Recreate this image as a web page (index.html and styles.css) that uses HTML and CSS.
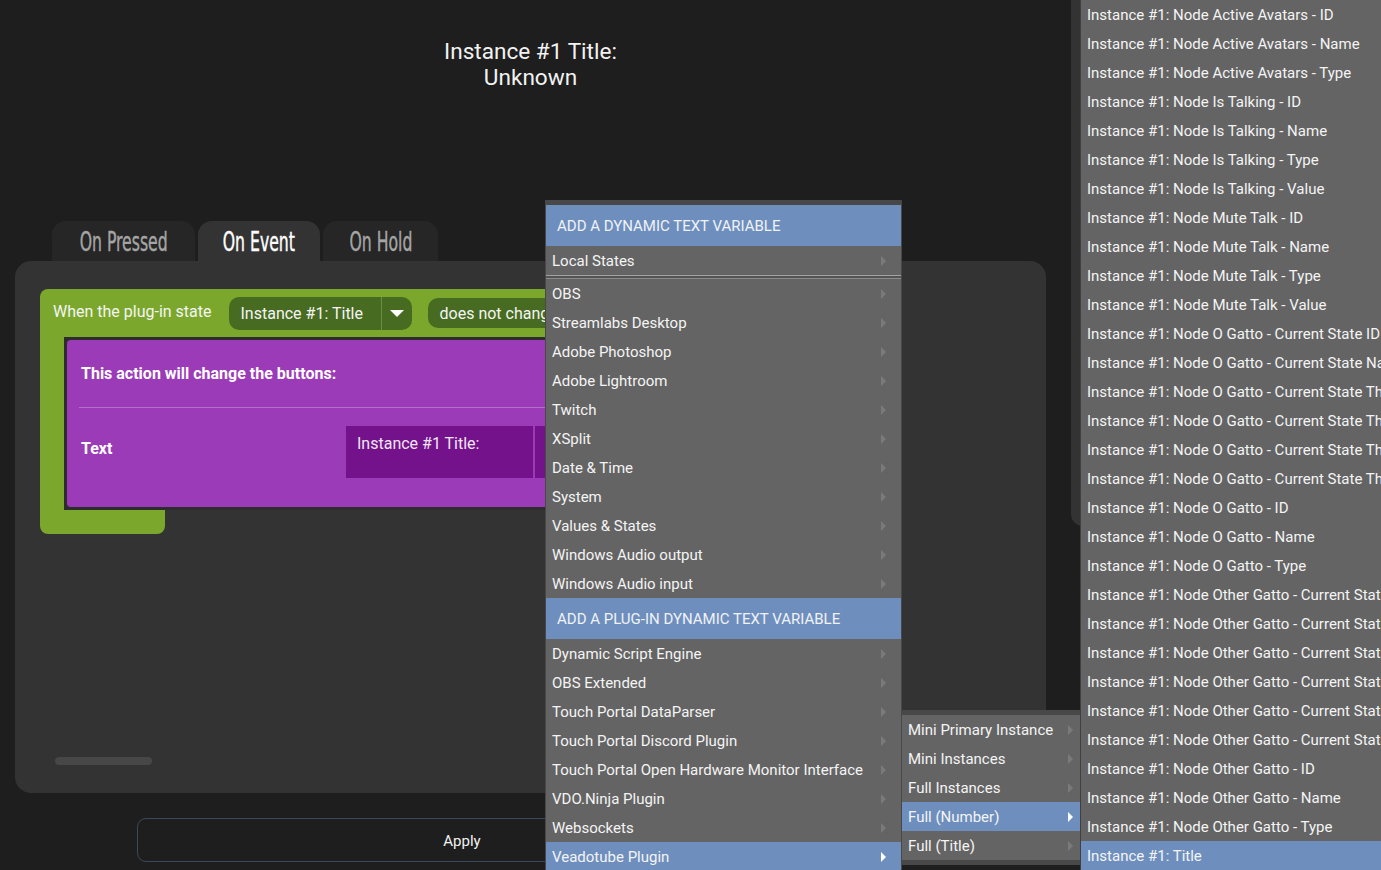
FILE: index.html
```html
<!DOCTYPE html>
<html lang="en">
<head>
    <meta charset="UTF-8">
    <meta name="viewport" content="width=device-width, initial-scale=1.0">
    <title>Button Editor - Dynamic Text</title>
    <link rel="stylesheet" href="styles.css">
</head>
<body>
    <div class="page">
        <!-- Editor Column -->
        <div class="editor">
            <div class="preview-title">Instance #1 Title:<br>Unknown</div>

            <!-- Tabs -->
            <div class="tabs">
                <div class="tab tab-pressed"><span>On Pressed</span></div>
                <div class="tab tab-event active"><span>On Event</span></div>
                <div class="tab tab-hold"><span>On Hold</span></div>
            </div>

            <!-- Action Panel -->
            <div class="panel">
                <div class="condition">
                    <div class="condition-head">
                        <span class="condition-label">When the plug-in state</span>
                        <div class="pill pill-select">
                            <span class="pill-text">Instance #1: Title</span>
                            <span class="pill-caret"></span>
                        </div>
                        <div class="pill pill-op">does not change</div>
                    </div>
                    <div class="action-wrap">
                        <div class="action">
                            <div class="action-title">This action will change the buttons:</div>
                            <div class="action-sep"></div>
                            <div class="action-row">
                                <span class="action-label">Text</span>
                                <div class="action-input">Instance #1 Title:</div>
                                <div class="action-input action-input-more"></div>
                            </div>
                        </div>
                    </div>
                </div>
                <div class="condition-foot"></div>
                <div class="scroll-thumb"></div>
            </div>

            <button class="apply">Apply</button>
        </div>

        <!-- Window behind the list -->
        <div class="side-panel"></div>
    </div>

    <!-- Context Menu -->
    <div class="menu menu-main">
        <div class="menu-header">ADD A DYNAMIC TEXT VARIABLE</div>
        <div class="menu-item sub">Local States</div>
        <div class="menu-sep"></div>
        <div class="menu-item sub">OBS</div>
        <div class="menu-item sub">Streamlabs Desktop</div>
        <div class="menu-item sub">Adobe Photoshop</div>
        <div class="menu-item sub">Adobe Lightroom</div>
        <div class="menu-item sub">Twitch</div>
        <div class="menu-item sub">XSplit</div>
        <div class="menu-item sub">Date &amp; Time</div>
        <div class="menu-item sub">System</div>
        <div class="menu-item sub">Values &amp; States</div>
        <div class="menu-item sub">Windows Audio output</div>
        <div class="menu-item sub">Windows Audio input</div>
        <div class="menu-header">ADD A PLUG-IN DYNAMIC TEXT VARIABLE</div>
        <div class="menu-item sub">Dynamic Script Engine</div>
        <div class="menu-item sub">OBS Extended</div>
        <div class="menu-item sub">Touch Portal DataParser</div>
        <div class="menu-item sub">Touch Portal Discord Plugin</div>
        <div class="menu-item sub">Touch Portal Open Hardware Monitor Interface</div>
        <div class="menu-item sub">VDO.Ninja Plugin</div>
        <div class="menu-item sub">Websockets</div>
        <div class="menu-item sub selected">Veadotube Plugin</div>
    </div>

    <!-- Plugin Submenu -->
    <div class="menu menu-plugin">
        <div class="menu-item sub">Mini Primary Instance</div>
        <div class="menu-item sub">Mini Instances</div>
        <div class="menu-item sub">Full Instances</div>
        <div class="menu-item sub selected">Full (Number)</div>
        <div class="menu-item sub">Full (Title)</div>
    </div>

    <!-- State List -->
    <div class="menu menu-states">
        <div class="menu-item">Instance #1: Node Active Avatars - ID</div>
        <div class="menu-item">Instance #1: Node Active Avatars - Name</div>
        <div class="menu-item">Instance #1: Node Active Avatars - Type</div>
        <div class="menu-item">Instance #1: Node Is Talking - ID</div>
        <div class="menu-item">Instance #1: Node Is Talking - Name</div>
        <div class="menu-item">Instance #1: Node Is Talking - Type</div>
        <div class="menu-item">Instance #1: Node Is Talking - Value</div>
        <div class="menu-item">Instance #1: Node Mute Talk - ID</div>
        <div class="menu-item">Instance #1: Node Mute Talk - Name</div>
        <div class="menu-item">Instance #1: Node Mute Talk - Type</div>
        <div class="menu-item">Instance #1: Node Mute Talk - Value</div>
        <div class="menu-item">Instance #1: Node O Gatto - Current State ID</div>
        <div class="menu-item">Instance #1: Node O Gatto - Current State Name</div>
        <div class="menu-item">Instance #1: Node O Gatto - Current State Thumbnail</div>
        <div class="menu-item">Instance #1: Node O Gatto - Current State Thumbnail Hash</div>
        <div class="menu-item">Instance #1: Node O Gatto - Current State Thumbnail Path</div>
        <div class="menu-item">Instance #1: Node O Gatto - Current State Thumbnail Size</div>
        <div class="menu-item">Instance #1: Node O Gatto - ID</div>
        <div class="menu-item">Instance #1: Node O Gatto - Name</div>
        <div class="menu-item">Instance #1: Node O Gatto - Type</div>
        <div class="menu-item">Instance #1: Node Other Gatto - Current State ID</div>
        <div class="menu-item">Instance #1: Node Other Gatto - Current State Name</div>
        <div class="menu-item">Instance #1: Node Other Gatto - Current State Thumbnail</div>
        <div class="menu-item">Instance #1: Node Other Gatto - Current State Thumbnail Hash</div>
        <div class="menu-item">Instance #1: Node Other Gatto - Current State Thumbnail Path</div>
        <div class="menu-item">Instance #1: Node Other Gatto - Current State Thumbnail Size</div>
        <div class="menu-item">Instance #1: Node Other Gatto - ID</div>
        <div class="menu-item">Instance #1: Node Other Gatto - Name</div>
        <div class="menu-item">Instance #1: Node Other Gatto - Type</div>
        <div class="menu-item selected">Instance #1: Title</div>
    </div>
</body>
</html>
```

FILE: styles.css
```css
/* Global Styling */
* {
    box-sizing: border-box;
}
body {
    margin: 0;
    width: 1381px;
    height: 870px;
    overflow: hidden;
    background-color: #1e1e1e;
    color: #f0f0f0;
    font-family: Roboto, "Liberation Sans", sans-serif;
    position: relative;
}
.page {
    display: flex;
    align-items: flex-start;
}
/* Editor Column */
.editor {
    width: 1031px;
    margin-left: 15px;
}
.preview-title {
    padding-top: 39px;
    text-align: center;
    font-size: 22.6px;
    line-height: 26px;
    color: #f2f2f2;
}
/* Tabs */
.tabs {
    display: flex;
    gap: 3px;
    margin-top: 130px;
    margin-left: 37px;
}
.tab {
    height: 40px;
    background-color: #262626;
    border-radius: 14px 14px 0 0;
    display: flex;
    justify-content: center;
    align-items: center;
    color: #a5a5a5;
}
.tab span {
    font-family: "Liberation Sans Narrow", "DejaVu Sans Condensed", sans-serif;
    font-stretch: condensed;
    font-size: 26px;
    display: inline-block;
    transform: scaleX(0.67);
    padding-top: 2px;
    -webkit-text-stroke: 0.4px currentColor;
}
.tab-pressed { width: 143px; }
.tab-event { width: 122px; }
.tab-hold { width: 115px; }
.tab.active {
    background-color: #333333;
    color: #ffffff;
}
/* Action Panel */
.panel {
    height: 532px;
    background-color: #333333;
    border-radius: 16px;
    padding: 28px 0 0 25px;
    display: flex;
    flex-direction: column;
}
.condition {
    width: 620px;
    background-color: #7ba82c;
    border-radius: 8px 8px 0 0;
    padding-left: 24px;
}
.condition-head {
    height: 48px;
    display: flex;
    align-items: center;
    margin-left: -24px;
    padding-left: 13px;
}
.condition-label {
    font-size: 16px;
    color: #f4f4f4;
    margin-right: 17px;
    margin-top: -4px;
}
.pill {
    height: 33px;
    background-color: #476b20;
    border-radius: 10px;
    display: flex;
    align-items: center;
    font-size: 16px;
    color: #f4f4f4;
}
.pill-select {
    width: 183px;
    margin-right: 16px;
}
.pill-text {
    padding-left: 12px;
    width: 152px;
}
.pill-caret {
    width: 31px;
    height: 33px;
    border-left: 1px solid #6b8f3c;
    display: flex;
    justify-content: center;
    align-items: center;
}
.pill-caret::after {
    content: "";
    border-left: 7px solid transparent;
    border-right: 7px solid transparent;
    border-top: 7px solid #ffffff;
}
.pill-op {
    height: 30px;
    padding: 0 12px;
    white-space: nowrap;
}
.action-wrap {
    background-color: #2d2d2d;
    padding: 3px 0 3px 3px;
}
.action {
    background-color: #9c3bb8;
    border-radius: 4px;
    padding: 0 0 29px 14px;
}
.action-title {
    height: 67px;
    display: flex;
    align-items: center;
    font-size: 16px;
    font-weight: bold;
    color: #ffffff;
}
.action-sep {
    height: 1px;
    background-color: #b66dcc;
    margin-left: -2px;
}
.action-row {
    display: flex;
    margin-top: 18px;
    height: 52px;
}
.action-label {
    width: 265px;
    padding-top: 13px;
    font-size: 16px;
    font-weight: bold;
    color: #ffffff;
}
.action-input {
    width: 187px;
    background-color: #74128b;
    padding: 8px 0 0 11px;
    font-size: 16px;
    color: #f0e6f3;
}
.action-input-more {
    margin-left: 2px;
    width: 120px;
}
.condition-foot {
    width: 125px;
    height: 24px;
    background-color: #7ba82c;
    border-radius: 0 0 8px 8px;
}
.scroll-thumb {
    margin-top: auto;
    margin-bottom: 28px;
    margin-left: 15px;
    width: 97px;
    height: 8px;
    border-radius: 4px;
    background-color: #474747;
}
/* Apply Button */
.apply {
    display: block;
    margin: 25px 0 0 122px;
    width: 650px;
    height: 44px;
    background-color: #1e1e1e;
    border: 1px solid #3a4a5c;
    border-radius: 9px;
    color: #f2f2f2;
    font-family: Roboto, "Liberation Sans", sans-serif;
    font-size: 15px;
    padding-top: 2px;
}
/* Window behind the list */
.side-panel {
    margin-left: 25px;
    flex-grow: 1;
    height: 526px;
    background-color: #333333;
    border-bottom-left-radius: 12px;
}
/* Menus */
.menu {
    position: absolute;
    background-color: #646464;
    border: 1px solid #484848;
    font-size: 15px;
    color: #f4f4f4;
}
.menu-main {
    left: 545px;
    top: 200px;
    width: 357px;
    border-top-width: 5px;
    border-bottom: none;
}
.menu-plugin {
    left: 902px;
    top: 710px;
    width: 179px;
    border-top-width: 5px;
    border-bottom-width: 5px;
    border-left: none;
}
.menu-states {
    left: 1080px;
    top: 0;
    right: 0;
    bottom: 0;
    border-top: none;
    border-right: none;
    border-bottom: none;
    border-left-color: #404040;
}
.menu-header {
    height: 41px;
    background-color: #6e8fbe;
    padding-left: 11px;
    display: flex;
    align-items: center;
    font-size: 15px;
    color: #f0f2f6;
    padding-top: 1px;
}
.menu-item {
    height: 29px;
    padding: 0 15px 0 6px;
    display: flex;
    align-items: center;
    justify-content: space-between;
    white-space: nowrap;
    overflow: hidden;
}
.menu-item.sub::after {
    content: "";
    border-left: 5px solid #7a7a7a;
    border-top: 5px solid transparent;
    border-bottom: 5px solid transparent;
}
.menu-plugin .menu-item {
    padding-right: 7px;
}
.menu-item.selected {
    background-color: #6e8fbe;
}
.menu-item.sub.selected::after {
    border-left-color: #ffffff;
}
.menu-sep {
    height: 4px;
    border-top: 1px solid #a3a3a3;
    border-bottom: 1px solid #8c8c8c;
    background-color: #545454;
}
```
